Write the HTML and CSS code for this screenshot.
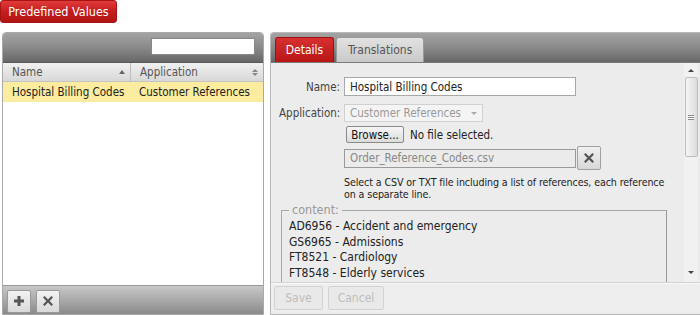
FILE: index.html
```html
<!DOCTYPE html>
<html>
<head>
<meta charset="utf-8">
<link rel="stylesheet" href="styles.css">
</head>
<body>
<div class="top">
  <button class="title-btn">Predefined Values</button>
</div>
<div class="main">
  <div class="left">
    <div class="bar">
      <input class="search" type="text">
    </div>
    <div class="cols">
      <div class="col c1"><span>Name</span><span class="up"></span></div>
      <div class="col c2"><span>Application</span><span class="both"><i class="u"></i><i class="d"></i></span></div>
    </div>
    <div class="rows">
      <div class="row sel"><span class="c1">Hospital Billing Codes</span><span class="c2">Customer References</span></div>
    </div>
    <div class="tools">
      <button class="tbtn"><svg width="12" height="12" viewBox="0 0 12 12"><path d="M4.5 1h3v3.5H11v3H7.5V11h-3V7.5H1v-3h3.5z" fill="#555"/></svg></button>
      <button class="tbtn"><svg width="12" height="12" viewBox="0 0 12 12"><path d="M2.6 1L6 4.4 9.4 1 11 2.6 7.6 6 11 9.4 9.4 11 6 7.6 2.6 11 1 9.4 4.4 6 1 2.6z" fill="#555"/></svg></button>
    </div>
  </div>
  <div class="right">
    <div class="bar tabs">
      <div class="tab active">Details</div>
      <div class="tab">Translations</div>
    </div>
    <div class="content">
      <div class="form">
        <div class="frow r-name">
          <label class="lbl">Name:</label>
          <input class="inp" type="text" value="Hospital Billing Codes">
        </div>
        <div class="frow r-app">
          <label class="lbl">Application:</label>
          <div class="select"><span>Customer References</span><span class="caret"></span></div>
        </div>
        <div class="frow r-file">
          <span class="lbl"></span>
          <button class="browse">Browse...</button><span class="nofile">No file selected.</span>
        </div>
        <div class="frow r-path">
          <span class="lbl"></span>
          <div class="inp dis">Order_Reference_Codes.csv</div>
          <button class="xbtn"><svg width="12" height="12" viewBox="0 0 12 12"><path d="M2.6 1L6 4.4 9.4 1 11 2.6 7.6 6 11 9.4 9.4 11 6 7.6 2.6 11 1 9.4 4.4 6 1 2.6z" fill="#555"/></svg></button>
        </div>
        <div class="frow r-help">
          <span class="lbl"></span>
          <p class="help">Select a CSV or TXT file including a list of references, each reference on a separate line.</p>
        </div>
        <fieldset class="fs">
          <legend>content:</legend>
          <div class="item">AD6956 - Accident and emergency</div>
          <div class="item">GS6965 - Admissions</div>
          <div class="item">FT8521 - Cardiology</div>
          <div class="item">FT8548 - Elderly services</div>
        </fieldset>
      </div>
      <div class="scroll">
        <span class="arr up2"></span>
        <div class="thumb"><span class="grip"></span></div>
        <span class="arr dn2"></span>
      </div>
    </div>
    <div class="foot">
      <button class="fbtn">Save</button>
      <button class="fbtn">Cancel</button>
    </div>
  </div>
</div>
</body>
</html>
```
FILE: styles.css
```css
* { box-sizing: border-box; }
html, body { margin: 0; padding: 0; }
body {
  width: 700px; height: 315px; overflow: hidden;
  background: #fff;
  font-family: "DejaVu Sans Condensed", "DejaVu Sans", sans-serif;
  font-size: 11.5px; color: #222;
}
button, input { font-family: inherit; font-size: inherit; }
.top { height: 32px; }
.title-btn {
  display: block; width: 117px; height: 23px; margin: 0; padding: 0 0 1px;
  border: 1px solid #a81414; border-radius: 3px;
  background: linear-gradient(#e03a3a, #c41e1e 50%, #b21414);
  color: #fff; font-size: 12.5px; text-align: center;
}
.main { display: flex; height: 283px; }
.left {
  width: 262px; margin-left: 2px; margin-right: 6px;
  border: 1px solid #a9a9a9; border-radius: 4px 4px 0 0;
  display: flex; flex-direction: column; overflow: hidden;
}
.bar {
  height: 30px; flex: none;
  background: linear-gradient(#a3a3a3, #8a8a8a 50%, #676767);
  border-bottom: 1px solid #5a5a5a;
  display: flex; align-items: center; justify-content: flex-end; padding-right: 8px;
}
.search { width: 104px; height: 17px; border: 1px solid #888; margin-top: -2px; background: #fff; padding: 0; }
.cols {
  height: 19px; flex: none; display: flex;
  background: linear-gradient(#f1f1f1, #d8d8d8);
  border-bottom: 1px solid #c4c4c4; color: #555;
}
.col { display: flex; align-items: center; justify-content: space-between; padding: 0 5px 0 9px; }
.col.c1 { width: 128px; border-right: 1px solid #bdbdbd; }
.col.c2 { flex: 1; }
.up { width: 0; height: 0; border: 3.5px solid transparent; border-bottom: 4px solid #666; border-top: 0; }
.both { display: flex; flex-direction: column; gap: 1px; }
.both i { display: block; width: 0; height: 0; border-left: 3px solid transparent; border-right: 3px solid transparent; }
.both .u { border-bottom: 3px solid #888; }
.both .d { border-top: 3px solid #888; }
.rows { flex: 1; background: #fff; }
.row { height: 20px; display: flex; align-items: center; }
.row.sel { background: #fcec9f; }
.row .c1 { width: 128px; padding-left: 9px; }
.row .c2 { padding-left: 8px; }
.tools {
  height: 29px; flex: none; display: flex; gap: 5px; align-items: center; padding: 2px 0 0 4px;
  background: linear-gradient(#c8c8c8, #a3a3a3 60%, #8a8a8a);
  border-top: 1px solid #999;
}
.tbtn {
  width: 24px; height: 23px; padding: 0; display: flex; align-items: center; justify-content: center;
  border: 1px solid #9a9a9a; border-radius: 2px; background: linear-gradient(#f2f2f2, #d9d9d9);
}
.right {
  flex: 1; border: 1px solid #b9b9b9; border-right: 0; border-radius: 4px 0 0 0;
  display: flex; flex-direction: column; overflow: hidden; background: #ececec;
}
.tabs { justify-content: flex-start; align-items: flex-end; padding: 0 0 0 4px; gap: 2px; border-bottom-color: #7a7a7a; }
.tab {
  height: 25px; padding: 0 11px; display: flex; align-items: center;
  border: 1px solid #9a9a9a; border-bottom: 0; border-radius: 3px 3px 0 0;
  background: linear-gradient(#e2e2e2, #c9c9c9); color: #555; font-size: 12px;
}
.tab.active { background: linear-gradient(#d83030, #b81616); color: #fff; border-color: #a01010; width: 59px; justify-content: center; padding: 0; }
.content { flex: 1; min-height: 0; overflow: hidden; display: flex; position: relative; border-bottom: 1px solid #d2d2d2; }
.form { flex: 1; padding: 14px 0 0 8px; }
.frow { display: flex; align-items: center; }
.lbl { width: 65px; text-align: right; padding-right: 4px; color: #444; flex: none; }
.inp {
  width: 232px; height: 19px; border: 1px solid #a8a8a8; background: #fff; padding: 0 5px; color: #222;
  display: flex; align-items: center; margin: 0;
}
.r-name { height: 19px; }
.r-app { margin-top: 8px; height: 18px; }
.select {
  width: 139px; height: 18px; border: 1px solid #d0d0d0; background: #f4f4f4; color: #999;
  display: flex; align-items: center; justify-content: space-between; padding: 0 5px;
}
.caret { width: 0; height: 0; border-left: 3px solid transparent; border-right: 3px solid transparent; border-top: 3px solid #aaa; }
.r-file { margin-top: 4px; height: 17px; }
.browse {
  height: 17px; width: 58px; padding: 0; margin-left: 2px; border: 1px solid #8a8a8a; border-radius: 2px;
  background: linear-gradient(#f6f6f6, #dcdcdc); color: #111;
}
.nofile { margin-left: 6px; }
.r-path { margin-top: 3px; height: 24px; }
.inp.dis { background: #ebebeb; border-color: #9a9a9a; color: #888; height: 19px; }
.xbtn {
  width: 24px; height: 24px; padding: 0; margin-left: 1px; display: flex; align-items: center; justify-content: center;
  border: 1px solid #a0a0a0; border-radius: 2px; background: linear-gradient(#f0f0f0, #d8d8d8);
}
.r-help { margin-top: 6px; align-items: flex-start; }
.help { margin: 0; width: 328px; font-size: 10.6px; letter-spacing: -0.1px; line-height: 12px; color: #222; }
.fs {
  margin: 4px 0 0 2px; width: 386px; height: 90px; padding: 2px 7px 0; border: 1px solid #a8a8a8; border-bottom: 0;
  border-right-color: #999;
}
.fs legend { padding: 0 3px; margin-left: 0; color: #999; font-size: 12.5px; line-height: 12px; }
.item { height: 15.5px; line-height: 16px; font-size: 12px; color: #222; }
.scroll {
  position: absolute; right: 2px; top: 0; bottom: 0; width: 14px;
  background: #f1f1f1; display: flex; flex-direction: column; align-items: center;
}
.arr { width: 0; height: 0; border-left: 3px solid transparent; border-right: 3px solid transparent; }
.up2 { border-bottom: 3px solid #444; margin-top: 6px; }
.dn2 { border-top: 3px solid #444; margin-top: auto; margin-bottom: 8px; }
.thumb {
  margin-top: 5px; width: 13px; height: 80px; border: 1px solid #bdbdbd; border-radius: 2px;
  background: linear-gradient(90deg, #f6f6f6, #dcdcdc);
  display: flex; align-items: center; justify-content: center;
}
.grip { width: 6px; height: 5px; border-top: 1px solid #888; border-bottom: 1px solid #888; box-shadow: inset 0 1px 0 #fff, inset 0 -1px 0 #fff; background: #888; }
.foot { height: 31px; flex: none; display: flex; gap: 5px; padding: 2px 0 0 3px; background: #eeeeee; border-top: 1px solid #f8f8f8; }
.fbtn {
  height: 24px; padding: 0 12px; border: 1px solid #d2d2d2; border-radius: 2px;
  background: #e9e9e9; color: #bdbdbd; font-size: 12px;
}
.fbtn:first-child { width: 49px; padding: 0; }
.fbtn:last-child { width: 56px; padding: 0; }
```
